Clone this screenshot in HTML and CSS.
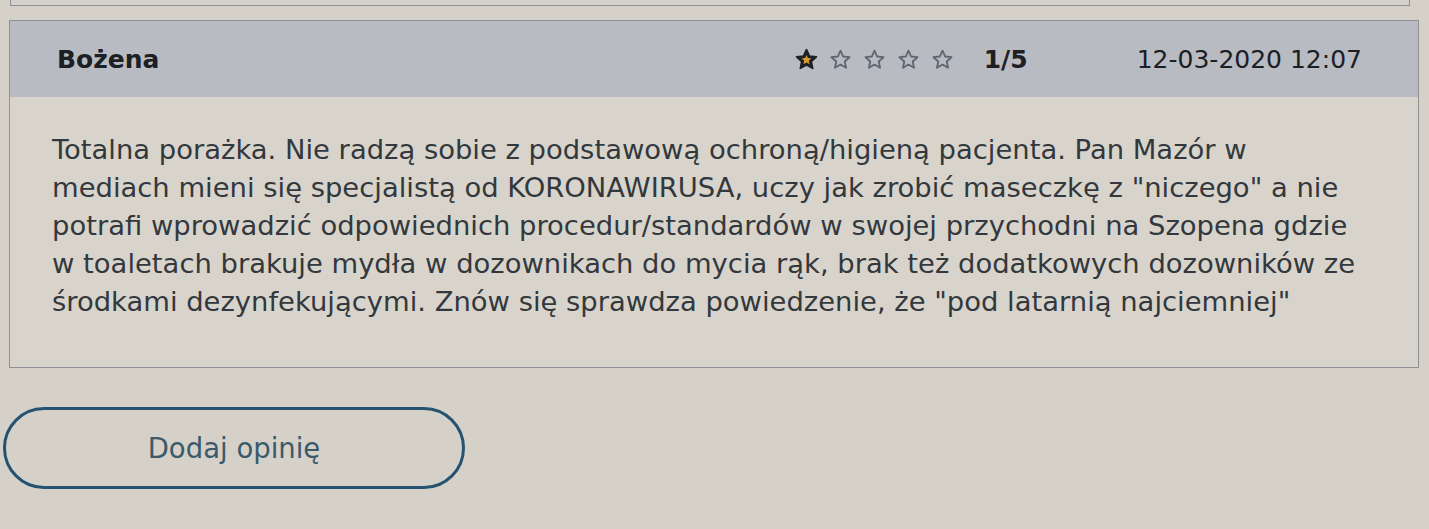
FILE: index.html
```html
<!DOCTYPE html>
<html lang="pl">
<head>
<meta charset="utf-8">
<title>Opinie</title>
<link rel="stylesheet" href="styles.css">
</head>
<body>
<div class="prev-card"></div>
<article class="review">
  <header class="review-head">
    <span class="author">Bożena</span>
    <span class="stars" aria-label="Ocena 1 na 5">
      <svg class="star star-on" viewBox="0 0 24 24"><path class="outer" d="M12 1.8l3.1 6.6 7.2.8-5.4 4.9 1.5 7.1L12 17.6l-6.4 3.6 1.5-7.1-5.4-4.9 7.2-.8z"/><path class="inner" d="M12 7.2l1.5 3.3 3.6.4-2.7 2.4.8 3.6L12 15.1l-3.2 1.8.8-3.6-2.7-2.4 3.6-.4z"/></svg>
      <svg class="star" viewBox="0 0 24 24"><path d="M12 2.8l2.8 6.1 6.6.7-5 4.5 1.4 6.5L12 17.3l-5.8 3.3 1.4-6.5-5-4.5 6.6-.7z"/></svg>
      <svg class="star" viewBox="0 0 24 24"><path d="M12 2.8l2.8 6.1 6.6.7-5 4.5 1.4 6.5L12 17.3l-5.8 3.3 1.4-6.5-5-4.5 6.6-.7z"/></svg>
      <svg class="star" viewBox="0 0 24 24"><path d="M12 2.8l2.8 6.1 6.6.7-5 4.5 1.4 6.5L12 17.3l-5.8 3.3 1.4-6.5-5-4.5 6.6-.7z"/></svg>
      <svg class="star" viewBox="0 0 24 24"><path d="M12 2.8l2.8 6.1 6.6.7-5 4.5 1.4 6.5L12 17.3l-5.8 3.3 1.4-6.5-5-4.5 6.6-.7z"/></svg>
    </span>
    <span class="score">1/5</span>
    <time class="date">12-03-2020 12:07</time>
  </header>
  <div class="review-body">
    <p class="review-text">Totalna porażka. Nie radzą sobie z podstawową ochroną/higieną pacjenta. Pan Mazór w mediach mieni się specjalistą od KORONAWIRUSA, uczy jak zrobić maseczkę z "niczego" a nie potrafi wprowadzić odpowiednich procedur/standardów w swojej przychodni na Szopena gdzie w toaletach brakuje mydła w dozownikach do mycia rąk, brak też dodatkowych dozowników ze środkami dezynfekującymi. Znów się sprawdza powiedzenie, że "pod latarnią najciemniej"</p>
  </div>
</article>
<button class="add-btn" type="button">Dodaj opinię</button>
</body>
</html>
```
FILE: styles.css
```css
html, body {
  margin: 0;
  padding: 0;
}
body {
  background: #d5d1c8;
  font-family: "DejaVu Sans", "Liberation Sans", sans-serif;
  color: #2b2f33;
  width: 1429px;
  height: 529px;
  overflow: hidden;
}
.prev-card {
  margin: 0 19px 0 10px;
  height: 5px;
  border: 1px solid #8d9095;
  border-top: none;
}
.review {
  margin: 14px 10px 0 9px;
  border: 1px solid #8d9095;
  background: #d8d4cc;
}
.review-head {
  display: flex;
  align-items: center;
  height: 76px;
  padding: 0 56px 0 47px;
  background: #b8bbc1;
  font-size: 25px;
  color: #1c2024;
}
.author {
  flex: 1;
  font-weight: 700;
  font-size: 25px;
}
.stars {
  display: flex;
  gap: 11px;
  margin-right: 30px;
}
.star {
  width: 23px;
  height: 23px;
}
.star path {
  fill: none;
  stroke: #5e6670;
  stroke-width: 1.9;
  stroke-linejoin: round;
}
.star-on .outer {
  fill: #1d2227;
  stroke: #1d2227;
}
.star-on .inner {
  fill: #d79a2e;
  stroke: none;
}
.score {
  font-weight: 700;
  width: 153px;
}
.date {
  font-size: 25px;
}
.review-body {
  padding: 34px 56px 46px 42px;
}
.review-text {
  margin: 0;
  font-size: 27.4px;
  line-height: 38px;
  color: #33383d;
}
.add-btn {
  display: block;
  margin: 39px 0 0 3px;
  width: 462px;
  height: 82px;
  border: 3px solid #255271;
  border-radius: 41px;
  background: transparent;
  font-family: "DejaVu Sans", "Liberation Sans", sans-serif;
  font-size: 27.5px;
  color: #3a5a6c;
  cursor: pointer;
}
```
